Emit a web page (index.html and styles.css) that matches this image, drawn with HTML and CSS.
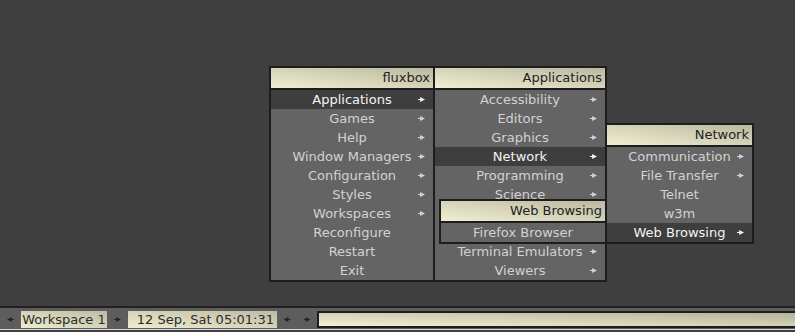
FILE: index.html
```html
<!DOCTYPE html>
<html lang="en">
<head>
<meta charset="UTF-8" />
<title>fluxbox</title>
<link rel="stylesheet" href="styles.css">
</head>
<body>
<div class="screen">
  <div class="desktop">
    <!-- Root menu -->
    <div class="menu menu-root">
      <div class="menu-title">fluxbox</div>
      <ul class="menu-items">
        <li class="item sub active">Applications</li>
        <li class="item sub">Games</li>
        <li class="item sub">Help</li>
        <li class="item sub">Window Managers</li>
        <li class="item sub">Configuration</li>
        <li class="item sub">Styles</li>
        <li class="item sub">Workspaces</li>
        <li class="item">Reconfigure</li>
        <li class="item">Restart</li>
        <li class="item">Exit</li>
      </ul>
    </div>

    <!-- Applications submenu -->
    <div class="menu menu-apps">
      <div class="menu-title">Applications</div>
      <ul class="menu-items">
        <li class="item sub">Accessibility</li>
        <li class="item sub">Editors</li>
        <li class="item sub">Graphics</li>
        <li class="item sub active">Network</li>
        <li class="item sub">Programming</li>
        <li class="item sub">Science</li>
        <!-- these two sit under the Web Browsing menu -->
        <li class="item sub"></li>
        <li class="item sub"></li>
        <li class="item sub">Terminal Emulators</li>
        <li class="item sub">Viewers</li>
      </ul>
    </div>

    <!-- Network submenu -->
    <div class="menu menu-network">
      <div class="menu-title">Network</div>
      <ul class="menu-items">
        <li class="item sub">Communication</li>
        <li class="item sub">File Transfer</li>
        <li class="item">Telnet</li>
        <li class="item">w3m</li>
        <li class="item sub active">Web Browsing</li>
      </ul>
    </div>

    <!-- Web Browsing submenu -->
    <div class="menu menu-web">
      <div class="menu-title">Web Browsing</div>
      <ul class="menu-items">
        <li class="item">Firefox Browser</li>
      </ul>
    </div>
  </div>

  <!-- Toolbar -->
  <div class="toolbar">
    <div class="tb-btn"><span class="tb-arrow left"></span></div>
    <div class="tb-label workspace">Workspace 1</div>
    <div class="tb-btn"><span class="tb-arrow right"></span></div>
    <div class="tb-label clock">12 Sep, Sat 05:01:31</div>
    <div class="tb-btn narrow"><span class="tb-arrow left"></span></div>
    <div class="tb-btn narrow"><span class="tb-arrow right"></span></div>
    <div class="iconbar"></div>
  </div>
</div>
</body>
</html>
```

FILE: styles.css
```css
body {
  margin: 0;
  background: #3f3f3f;
  font-family: "DejaVu Sans", sans-serif;
  font-size: 13px;
}
.screen {
  display: flex;
  flex-direction: column;
  width: 795px;
  height: 332px;
  overflow: hidden;
}
.desktop {
  flex: 1;
  position: relative;
}

/* Menus */
.menu {
  position: absolute;
  box-sizing: border-box;
  background: #646464;
  border: 2px solid #1d1d1d;
}
.menu-title {
  height: 20px;
  line-height: 20px;
  padding-right: 3px;
  text-align: right;
  color: #222;
  background: linear-gradient(to top right, #f0efd1, #bab9a0);
  border-bottom: 2px solid #1d1d1d;
  white-space: nowrap;
}
.menu-items {
  list-style: none;
  margin: 0;
  padding: 0;
}
.item {
  position: relative;
  height: 19px;
  line-height: 20px;
  text-align: center;
  color: #d2d2d2;
  white-space: nowrap;
}
.item.active {
  background: #3e3e3e;
  color: #f4f4f4;
}
.item.sub::after {
  content: "";
  position: absolute;
  right: 8px;
  top: 7px;
  width: 7px;
  height: 5px;
  background: currentColor;
  clip-path: polygon(0 40%, 30% 40%, 30% 0, 100% 50%, 30% 100%, 30% 60%, 0 60%);
}

.menu-root { left: 269px; top: 66px; width: 166px; }
.menu-apps { left: 433px; top: 66px; width: 174px; }
.menu-network { left: 605px; top: 123px; width: 149px; }
.menu-web { left: 439px; top: 199px; width: 168px; }

/* Toolbar */
.toolbar {
  display: flex;
  align-items: center;
  height: 17px;
  padding: 3px 0 1px;
  margin-bottom: 2px;
  background: #5d5d5d;
  border-top: 2px solid #222;
  border-bottom: 1px solid #d8d8d8;
  overflow: hidden;
}
.tb-btn {
  width: 21px;
  height: 17px;
  display: flex;
  align-items: center;
  justify-content: center;
  flex-shrink: 0;
}
.tb-btn.narrow { width: 20px; }
.tb-arrow {
  width: 7px;
  height: 5px;
  background: #262626;
}
.tb-arrow.right {
  clip-path: polygon(0 40%, 30% 40%, 30% 0, 100% 50%, 30% 100%, 30% 60%, 0 60%);
}
.tb-arrow.left {
  clip-path: polygon(100% 40%, 70% 40%, 70% 0, 0 50%, 70% 100%, 70% 60%, 100% 60%);
}
.tb-label {
  height: 17px;
  line-height: 17px;
  color: #2b2b2b;
  background: linear-gradient(to top right, #eeedcf, #bdbca3);
  white-space: nowrap;
  flex-shrink: 0;
  box-sizing: border-box;
}
.workspace {
  width: 86px;
  text-align: center;
}
.clock {
  width: 149px;
  text-align: right;
  padding-right: 3px;
}
.iconbar {
  flex: 1;
  height: 17px;
  box-sizing: border-box;
  border: 2px solid #1d1d1d;
  border-right: none;
  background: linear-gradient(to top right, #f2f1d2, #b4b39b);
}
```
